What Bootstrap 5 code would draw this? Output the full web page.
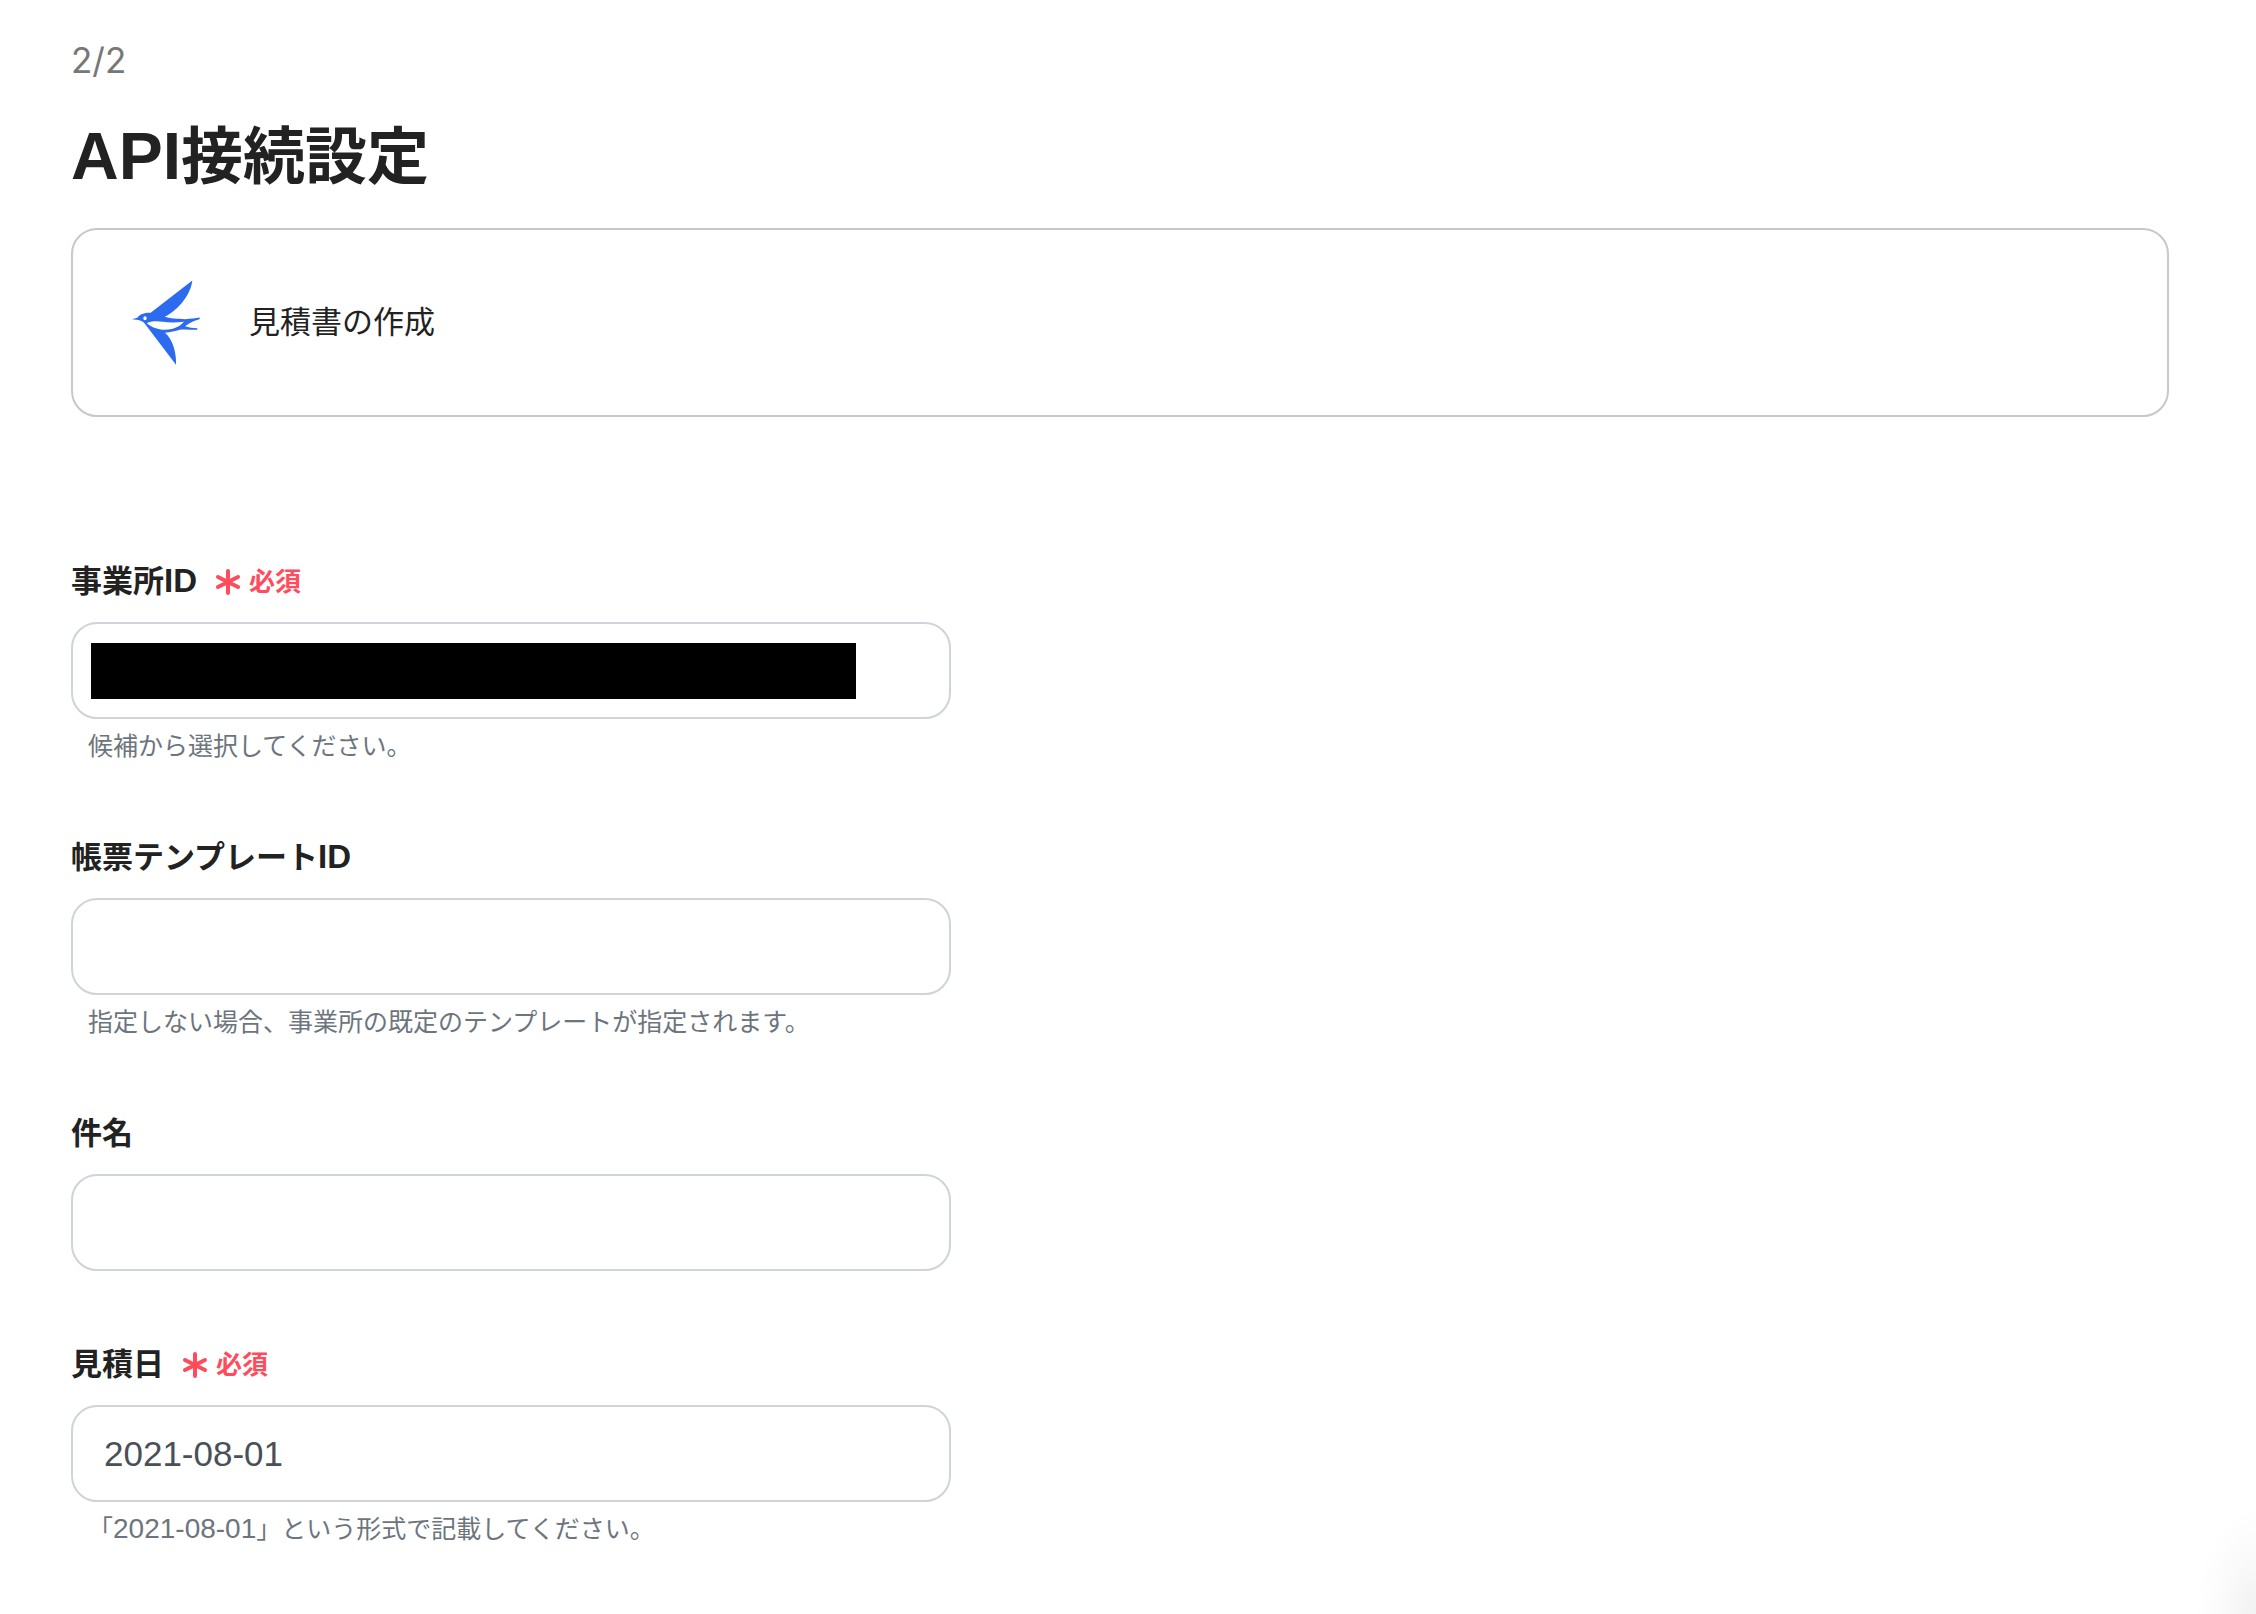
<!DOCTYPE html>
<html lang="ja">
<head>
<meta charset="utf-8">
<meta name="viewport" content="width=device-width, initial-scale=1">
<title>API接続設定</title>
<link href="https://cdn.jsdelivr.net/npm/bootstrap@5.3.0/dist/css/bootstrap.min.css" rel="stylesheet">
<style>
  body { font-family: "Liberation Sans", "Noto Sans CJK JP", sans-serif; color: #222; background: #fff; }
  .page-wrap { padding: 42px 87px 48px 71px; min-height: 100vh; overflow: hidden; }
  .step-count { font: 35px/36px Inter, sans-serif; color: #777; margin-bottom: 42px; }
  .page-title { font-size: 62px; line-height: 76px; font-weight: 700; margin-bottom: 32px; }
  .page-title span { font-size: 66px; line-height: 1; }
  .action-card { border: 2px solid #c8c8c8; border-radius: 26px; padding: 50px 59px; gap: 49px; margin-bottom: 145px; }
  .action-card svg { width: 68px; height: 85px; }
  .action-name { font-size: 31px; line-height: 40px; }
  .form-stack { gap: 74px; max-width: 880px; }
  .form-stack .form-label { font-size: 31px; line-height: 40px; font-weight: 700; }
  .form-label span { font-size: 33px; line-height: 1; }
  .label-row { height: 40px; margin-bottom: 20px; gap: 18px; }
  .need { color: #ff4b5c; font-size: 26px; line-height: 40px; font-weight: 700; gap: 8px; }
  .need svg { width: 26px; height: 26px; }
  .form-stack .form-control { height: 97px; border: 2px solid #ced4da; border-radius: 26px; padding: 0 31px; font-size: 35px; color: #495057; }
  .form-stack .form-text { font-size: 25px; line-height: 36px; margin: 9px 0 0 17px; color: #6c757d; }
  .form-text span { font-size: 28px; line-height: 1; }
  .redaction { background: #000; left: 20px; right: 95px; top: 21px; bottom: 20px; }
  .corner-shade { right: 0; bottom: 0; width: 64px; height: 120px; background: radial-gradient(60px 108px at 100% 100%, rgba(0,0,0,.055), rgba(0,0,0,.018) 55%, transparent); pointer-events: none; }
</style>
</head>
<body>
<main class="page-wrap position-relative">
  <div class="step-count">2/2</div>
  <h1 class="page-title"><span>API</span>接続設定</h1>

  <section class="action-card d-flex align-items-center">
    <svg class="flex-shrink-0" viewBox="66 62 204 254" aria-hidden="true">
      <path fill="#2c6bf0" d="M66 179 L82 175 C90 163 106 159 122 160 L247 63 C243 103 207 151 164 172 C178 177 205 178 225 179 C242 178 256 176 269 174 L269 179 C255 183 240 188 225 200 C236 204 248 205 262 206 L262 211 C242 211 224 208 209 211 C196 215 182 218 165 220 C188 239 200 281 198 316 L104 192 C100 184 84 180 66 179 Z"/>
      <path fill="#fff" d="M110 191 C122 185 140 184 158 187 C178 190 199 190 222 187 C214 196 206 202 196 205 C182 211 166 212 152 210 C136 207 120 200 110 191 Z"/>
      <ellipse cx="105" cy="176" rx="5" ry="6" fill="#fff"/>
    </svg>
    <div class="action-name">見積書の作成</div>
  </section>

  <form class="form-stack d-flex flex-column">
    <div>
      <div class="label-row d-flex align-items-center">
        <label class="form-label mb-0" for="office">事業所<span>ID</span></label>
        <div class="need d-flex align-items-center">
          <svg viewBox="0 0 26 26" aria-hidden="true"><path d="M13 2v22M3 8l20 10M23 8L3 18" stroke="#ff4b5c" stroke-width="4" stroke-linecap="round" fill="none"/></svg>
          必須
        </div>
      </div>
      <div class="position-relative">
        <input class="form-control" id="office" type="text" aria-describedby="office-help">
        <div class="redaction position-absolute"></div>
      </div>
      <div class="form-text" id="office-help">候補から選択してください。</div>
    </div>

    <div>
      <div class="label-row d-flex align-items-center">
        <label class="form-label mb-0" for="template">帳票テンプレート<span>ID</span></label>
      </div>
      <input class="form-control" id="template" type="text" aria-describedby="template-help">
      <div class="form-text" id="template-help">指定しない場合、事業所の既定のテンプレートが指定されます。</div>
    </div>

    <div>
      <div class="label-row d-flex align-items-center">
        <label class="form-label mb-0" for="subject">件名</label>
      </div>
      <input class="form-control" id="subject" type="text">
    </div>

    <div>
      <div class="label-row d-flex align-items-center">
        <label class="form-label mb-0" for="date">見積日</label>
        <div class="need d-flex align-items-center">
          <svg viewBox="0 0 26 26" aria-hidden="true"><path d="M13 2v22M3 8l20 10M23 8L3 18" stroke="#ff4b5c" stroke-width="4" stroke-linecap="round" fill="none"/></svg>
          必須
        </div>
      </div>
      <input class="form-control" id="date" type="text" value="2021-08-01" aria-describedby="date-help">
      <div class="form-text" id="date-help">「<span>2021-08-01</span>」という形式で記載してください。</div>
    </div>
  </form>
  <div class="corner-shade position-absolute"></div>
</main>
<script src="https://cdn.jsdelivr.net/npm/bootstrap@5.3.0/dist/js/bootstrap.bundle.min.js"></script>
</body>
</html>
